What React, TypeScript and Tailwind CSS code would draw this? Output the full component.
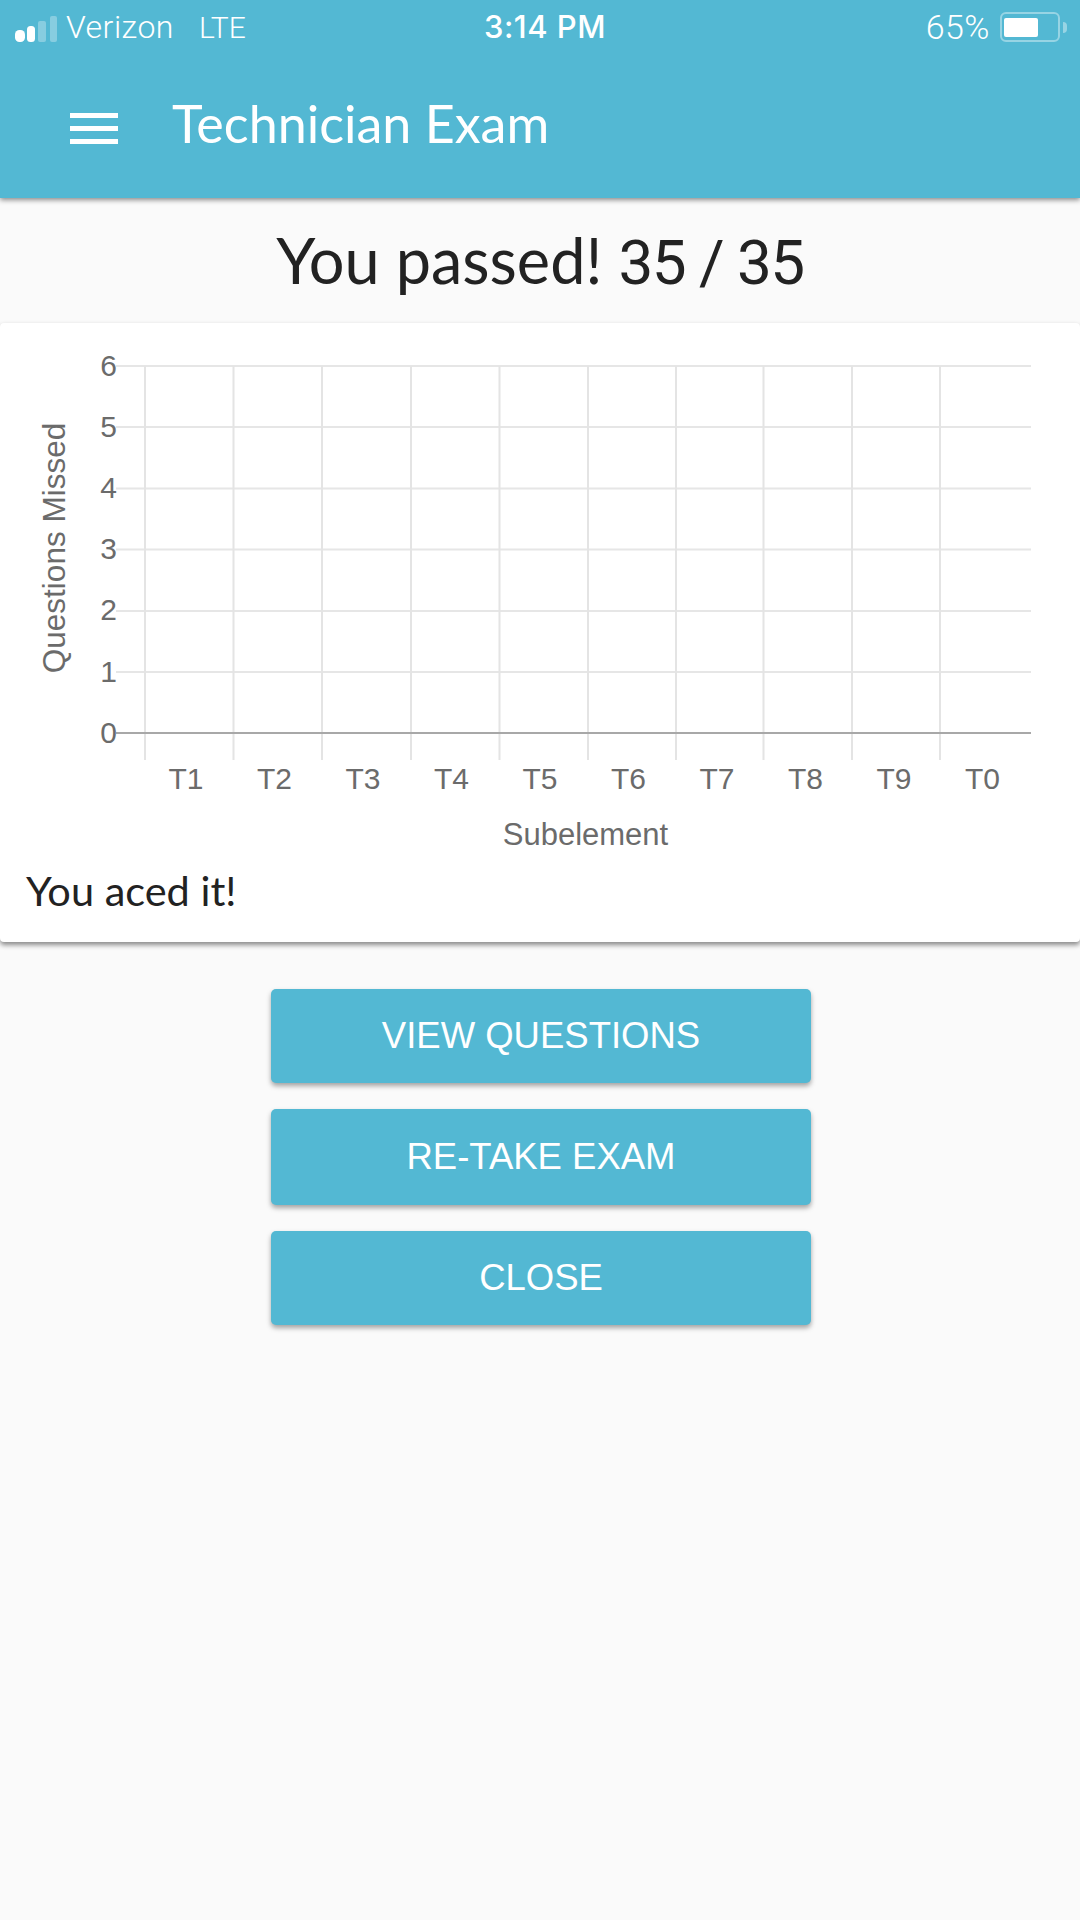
const gridYs = [366, 427, 488.5, 549.5, 611, 672];
const gridXs = [145, 233.5, 322, 411, 499.5, 588, 676, 763.5, 852, 940];
const yTicks = ["6", "5", "4", "3", "2", "1", "0"];
const xTicks = ["T1", "T2", "T3", "T4", "T5", "T6", "T7", "T8", "T9", "T0"];

function StatusBar() {
  return (
    <div className="relative flex h-[54px] items-center justify-between font-['Roboto',sans-serif] text-white">
      <div className="flex items-center pl-[15px] text-[32px] font-light">
        <svg width="43" height="26" viewBox="0 0 43 26" className="mr-[8px] mt-[3px] fill-white">
          <rect x="0" y="14" width="10" height="12" rx="4.5" />
          <rect x="12" y="10" width="8" height="16" rx="3.5" />
          <rect x="23" y="5" width="8" height="21" rx="2" opacity="0.3" />
          <rect x="35" y="0" width="7" height="26" rx="2" opacity="0.3" />
        </svg>
        <span className="tracking-[0.5px]">Verizon</span>
        <span className="ml-[25px] text-[30px]">LTE</span>
      </div>
      <div className="absolute inset-x-0 pl-[10px] text-center font-['Inter',sans-serif] text-[31px] font-medium tracking-[0.5px]">3:14 PM</div>
      <div className="flex items-center pr-[13px]">
        <span className="text-[34px] font-light tracking-[0.5px]">65%</span>
        <div className="ml-[10px] flex h-[30px] w-[60px] items-center rounded-[6px] border-2 border-white/40 p-[2px]">
          <div className="h-[19px] w-[34px] rounded-[2px] bg-white" />
        </div>
        <div className="ml-[3px] h-[11px] w-[4px] rounded-r-full bg-white/40" />
      </div>
    </div>
  );
}

function Chart() {
  return (
    <svg width="1080" height="530" viewBox="0 323 1080 530" className="block">
      {gridYs.map((y) => (
        <line key={y} x1="116" x2="1031" y1={y} y2={y} stroke="#e6e6e6" strokeWidth="2" />
      ))}
      {gridXs.map((x) => (
        <line key={x} x1={x} x2={x} y1="366" y2="760" stroke="#e4e4e4" strokeWidth="2" />
      ))}
      <line x1="116" x2="1031" y1="733" y2="733" stroke="#a8a8a8" strokeWidth="2" />
      <g fontFamily="'Liberation Sans', sans-serif" fill="#6b6b6b">
        {yTicks.map((t, i) => (
          <text key={t} x="117" y={376 + i * 61.1} fontSize="30" textAnchor="end">{t}</text>
        ))}
        {xTicks.map((t, i) => (
          <text key={t} x={186 + i * 88.5} y="789" fontSize="30" textAnchor="middle">{t}</text>
        ))}
        <text x="585.5" y="845" fontSize="31" textAnchor="middle">Subelement</text>
        <text transform="translate(65 548) rotate(-90)" fontSize="31.5" textAnchor="middle">Questions Missed</text>
      </g>
    </svg>
  );
}

export default function App() {
  return (
    <div className="flex h-[1920px] w-[1080px] flex-col overflow-hidden bg-[#fafafa] font-['Lato',sans-serif]">
      <header className="relative z-10 flex h-[198px] flex-col bg-[#53b8d3] shadow-[0_2px_5px_rgba(0,0,0,0.45)]">
        <StatusBar />
        <div className="flex flex-1 items-center pl-[70px] pt-[4px]">
          <div className="flex w-[48px] flex-col gap-[8px]">
            <div className="h-[5px] bg-white" />
            <div className="h-[5px] bg-white" />
            <div className="h-[5px] bg-white" />
          </div>
          <h1 className="mb-[10px] ml-[54px] text-[52px] font-normal text-white">Technician Exam</h1>
        </div>
      </header>

      <h2 className="mt-[26px] h-[99px] text-center text-[63px] leading-[72px] text-[#222222]">
        You passed! <span className="font-['Roboto',sans-serif] text-[62px] tracking-[-1.5px]">35 / 35</span>
      </h2>

      <section className="h-[619px] rounded-[4px] bg-white shadow-[0_3px_5px_rgba(0,0,0,0.45)]">
        <Chart />
        <p className="ml-[26px] mt-[13px] text-[41.5px] leading-[48px] text-[#222222]">You aced it!</p>
      </section>

      <div className="ml-[2px] mt-[47px] flex flex-col items-center gap-[26px]">
        <button className="h-[94px] w-[540px] rounded-[5px] bg-[#53b8d3] font-['Liberation_Sans',sans-serif] text-[36.5px] text-white shadow-[0_3px_5px_rgba(0,0,0,0.35)]">
          VIEW QUESTIONS
        </button>
        <button className="h-[96px] w-[540px] rounded-[5px] bg-[#53b8d3] font-['Liberation_Sans',sans-serif] text-[36.5px] text-white shadow-[0_3px_5px_rgba(0,0,0,0.35)]">
          RE-TAKE EXAM
        </button>
        <button className="h-[94px] w-[540px] rounded-[5px] bg-[#53b8d3] font-['Liberation_Sans',sans-serif] text-[36.5px] text-white shadow-[0_3px_5px_rgba(0,0,0,0.35)]">
          CLOSE
        </button>
      </div>
    </div>
  );
}
